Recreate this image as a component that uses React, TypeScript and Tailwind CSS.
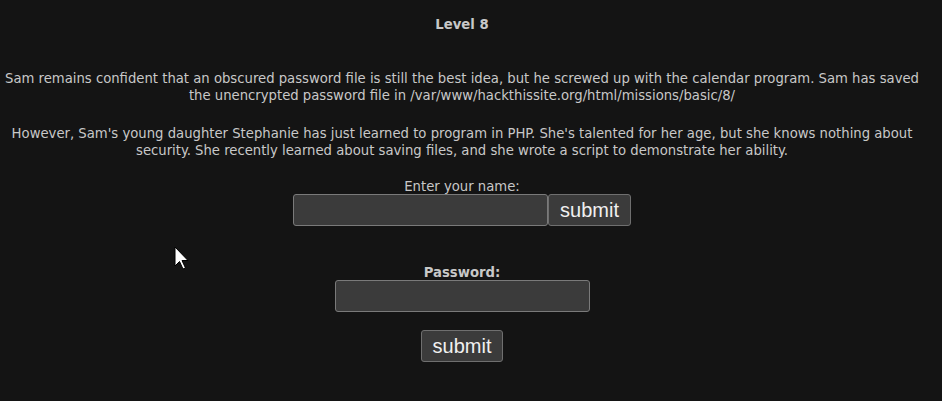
import React from 'react';

const SubmitButton: React.FC = () => (
  <button
    type="button"
    className="h-[32px] px-[11px] bg-[#3b3b3b] border border-[#6f6f6f] rounded-[3px] text-[20px] leading-none text-[#f0f0f0] align-top"
    style={{ fontFamily: 'Arial, "Liberation Sans", sans-serif' }}
  >
    submit
  </button>
);

const App: React.FC = () => {
  return (
    <div
      className="relative min-h-screen bg-[#141414] text-[#c8c8c8] text-[14.7px] leading-[17px]"
      style={{ fontFamily: 'Tahoma, "DejaVu Sans Condensed", "Liberation Sans Narrow", "Liberation Sans", sans-serif' }}
    >
      <div className="w-[924px] text-center pt-[15px]">
        <h1 className="font-bold">Level 8</h1>

        <p className="mt-[37px] px-[4px]">
          Sam remains confident that an obscured password file is still the best idea, but he screwed up with the calendar program. Sam has saved the unencrypted password file in /var/www/hackthissite.org/html/missions/basic/8/
        </p>
        <p className="mt-[21px] px-[4px]">
          However, Sam's young daughter Stephanie has just learned to program in PHP. She's talented for her age, but she knows nothing about security. She recently learned about saving files, and she wrote a script to demonstrate her ability.
        </p>

        <div className="mt-[19px]">
          <div>Enter your name:</div>
          <div className="flex justify-center">
            <input
              type="text"
              className="w-[255px] h-[32px] bg-[#3b3b3b] border border-[#7a7a7a] rounded-[3px] outline-none"
            />
            <SubmitButton />
          </div>
        </div>

        <div className="mt-[37px]">
          <div className="font-bold">Password:</div>
          <div className="flex justify-center">
            <input
              type="password"
              className="w-[255px] h-[32px] bg-[#3b3b3b] border border-[#7a7a7a] rounded-[3px] outline-none"
            />
          </div>
          <div className="flex justify-center mt-[18px]">
            <SubmitButton />
          </div>
        </div>
      </div>

      {/* mouse pointer */}
      <svg className="absolute left-[174px] top-[246px]" width="16" height="26" viewBox="0 0 16 26">
        <path d="M1 1 L1 20 L5.5 15.5 L9 23 L11.5 22 L8 14.5 L14 14.5 Z" fill="#fff" stroke="#000" strokeWidth="1" />
      </svg>
    </div>
  );
};

export default App;
